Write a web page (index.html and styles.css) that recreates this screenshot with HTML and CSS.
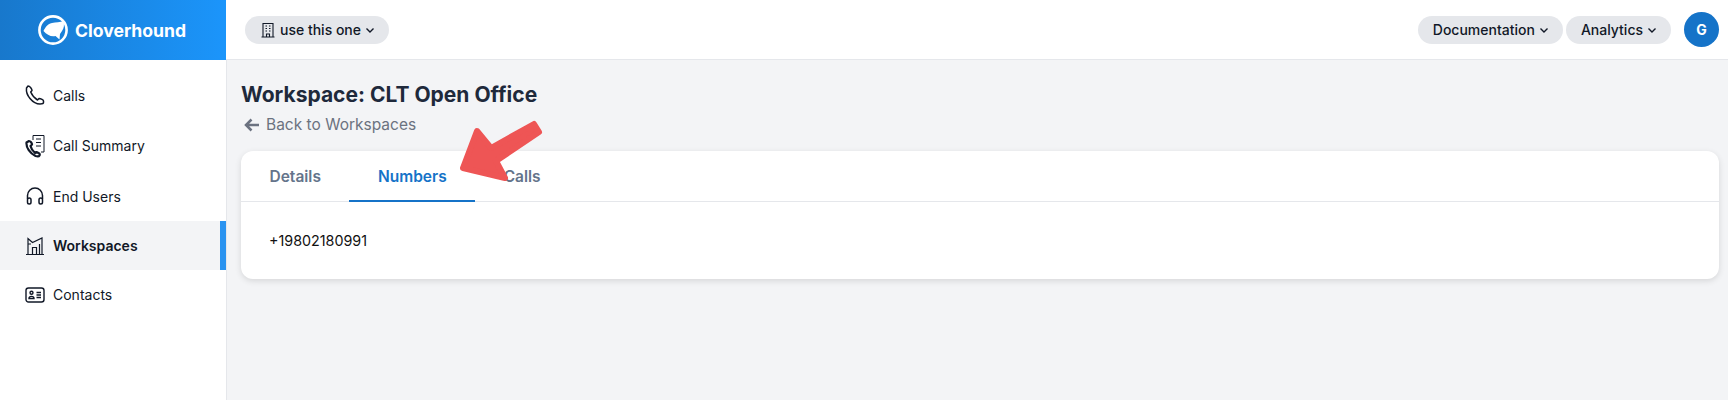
FILE: index.html
```html
<!DOCTYPE html>
<html lang="en">
<head>
  <meta charset="UTF-8" />
  <title>Workspace: CLT Open Office</title>
  <link rel="stylesheet" href="styles.css">
</head>
<body>
  <header class="topbar">
    <div class="brand">
      <svg class="brand-logo" width="32" height="32" viewBox="0 0 32 32">
        <circle cx="16" cy="16" r="13.6" fill="none" stroke="#fff" stroke-width="2.6"/>
        <path d="M6.5 17C8 14 10 10 15 9c4-.5 8-1 11.500-2 1 4 .5 7-1.500 10l-2 3-.5 5.500-4-3.500c-4.500 1-8.500-1-12-5Z" fill="#fff"/>
      </svg>
      <span class="brand-name">Cloverhound</span>
    </div>
    <div class="topbar-main">
      <button class="pill">
        <svg width="16" height="16" viewBox="0 0 16 16" fill="none" stroke="#111827" stroke-width="1.1">
          <path d="M1.5 15h13M3 15V1.500h10V15M6.500 15v-3h3v3M5.500 4H7M9 4h1.500M5.500 6.500H7M9 6.500h1.500M5.500 9H7M9 9h1.500"/>
        </svg>
        use this one
        <svg class="chev" width="10" height="10" viewBox="0 0 10 10"><path d="M1.5 3.500 5 7l3.500-3.500"/></svg>
      </button>
      <div class="topbar-right">
        <button class="pill">Documentation <svg class="chev" width="10" height="10" viewBox="0 0 10 10"><path d="M1.5 3.500 5 7l3.500-3.500"/></svg></button>
        <button class="pill">Analytics <svg class="chev" width="10" height="10" viewBox="0 0 10 10"><path d="M1.5 3.500 5 7l3.500-3.500"/></svg></button>
        <div class="avatar">G</div>
      </div>
    </div>
  </header>

  <div class="layout">
    <nav class="sidebar">
      <a class="nav-item">
        <svg width="20" height="20" viewBox="0 0 20 20" fill="none" stroke="#111827" stroke-width="1.5" stroke-linejoin="round">
          <path d="M3 1 1.500 3c-.5 4 1 7.500 3.500 10.500s6 5.500 10 5.500c1.500 0 3.500-.5 3.500-1.500v-1.500c0-1-2.500-2.500-4.500-2.500l-1.500 1.500C10 13.500 7 10 5.700 7L7 5.500C7 4 5 1 3 1Z"/>
        </svg>
        Calls
      </a>
      <a class="nav-item nav-item-tall">
        <svg width="20" height="24" viewBox="0 0 20 24" fill="none" stroke="#111827" stroke-linejoin="round">
          <path stroke-width="2.2" d="M4 7 1.500 8.500c-.5 5 3.500 11 9 13.500 1.500.5 3.500.5 4-.5s0-2-1-2.500l-2-1-1.500 1C7.500 17 6 14 5.500 12L7 10.500C7 9 5.500 7 4 7Z"/>
          <path stroke-width="1" d="M8 6V1.500h11V18h-3M11 5h5M11 8.500h5M11 12h5"/>
        </svg>
        Call Summary
      </a>
      <a class="nav-item">
        <svg width="20" height="20" viewBox="0 0 20 20" fill="none" stroke="#111827" stroke-width="1.5">
          <path d="M2.500 13V9.500a7.500 7.500 0 0 1 15 0V13"/>
          <rect x="2.500" y="12" width="3.500" height="6" rx="1.750"/>
          <rect x="14" y="12" width="3.500" height="6" rx="1.750"/>
        </svg>
        End Users
      </a>
      <a class="nav-item active">
        <svg width="20" height="20" viewBox="0 0 20 20" fill="none" stroke="#111827" stroke-width="1.2">
          <path d="M1 18.500h18M3 18.500V2.500l4.500 4 9.500-4.500v16.500M7.500 18.500v-7h4v7M14.500 8v10.500M3 8h3"/>
        </svg>
        Workspaces
      </a>
      <a class="nav-item nav-item-short">
        <svg width="20" height="20" viewBox="0 0 20 20" fill="none" stroke="#111827" stroke-width="1.4">
          <rect x="1" y="3" width="18" height="14" rx="2.500"/>
          <circle cx="6.500" cy="7.800" r="1.500"/>
          <path d="M4 13.500c0-2.800 5-2.800 5 0ZM11.500 7.500H16M11.500 10H16M11.500 12.500H16"/>
        </svg>
        Contacts
      </a>
    </nav>

    <main class="content">
      <h1 class="page-title">Workspace: CLT Open Office</h1>
      <a class="back-link">
        <svg width="16" height="14" viewBox="0 0 16 14" fill="none" stroke="#6b7280" stroke-width="2.5"><path d="M15 7H2.500M7.500 1.500 2 7l5.500 5.500"/></svg>
        Back to Workspaces
      </a>
      <section class="card">
        <div class="tabs">
          <div class="tab">Details</div>
          <div class="tab active">Numbers</div>
          <div class="tab">Calls</div>
        </div>
        <div class="card-body">+19802180991</div>
      </section>
    </main>
  </div>

  <svg class="annotation-arrow" width="100" height="75" viewBox="0 0 100 75">
    <path d="M27 16 41 33 84 9 89 17 46 46 55 63 13 53Z" fill="#ee5555" stroke="#ee5555" stroke-width="6" stroke-linejoin="round"/>
  </svg>
</body>
</html>
```

FILE: styles.css
```css
* {
  box-sizing: border-box;
}

body {
  margin: 0;
  height: 400px;
  overflow: hidden;
  font-family: 'Inter', sans-serif;
  font-optical-sizing: none;
  font-size: 14px;
  color: #111827;
  background: #f3f4f6;
}

.topbar {
  display: flex;
  height: 60px;
}

.brand {
  width: 226px;
  display: flex;
  align-items: center;
  justify-content: center;
  gap: 6px;
  padding-right: 3px;
  background: linear-gradient(to right, #1878cc, #1b95fb);
  color: #fff;
}

.brand-name {
  font-size: 17.6px;
  font-weight: 700;
}

.topbar-main {
  flex: 1;
  display: flex;
  align-items: center;
  justify-content: space-between;
  padding: 0 9px 0 19px;
  background: #fff;
  border-bottom: 1px solid #e5e7eb;
}

.topbar-right {
  display: flex;
  align-items: center;
  gap: 3px;
}

.pill {
  display: flex;
  align-items: center;
  gap: 4px;
  height: 28px;
  padding: 0 14px 0 15px;
  border: none;
  border-radius: 14px;
  background: #e5e7eb;
  font-family: inherit;
  font-size: 14px;
  font-weight: 500;
  color: #111827;
}

.chev {
  fill: none;
  stroke: #111827;
  stroke-width: 1.4;
}

.avatar {
  width: 35px;
  height: 35px;
  margin-left: 10px;
  border-radius: 50%;
  background: #1573c8;
  color: #fff;
  font-size: 14px;
  font-weight: 700;
  display: flex;
  align-items: center;
  justify-content: center;
}

.layout {
  display: flex;
  height: 340px;
}

.sidebar {
  width: 227px;
  padding-top: 10px;
  background: #fff;
  border-right: 1px solid #e5e7eb;
}

.nav-item {
  display: flex;
  align-items: center;
  gap: 8px;
  height: 50px;
  padding-left: 25px;
  font-size: 14px;
  color: #111827;
}

.nav-item-tall {
  height: 51px;
}

.nav-item-short {
  height: 49px;
}

.nav-item.active {
  height: 49px;
  font-weight: 600;
  background: #f3f4f6;
  border-right: 6px solid #2a93f0;
}

.content {
  flex: 1;
  padding: 21px 9px 0 14px;
}

.page-title {
  margin: 0;
  font-size: 21px;
  line-height: 28px;
  font-weight: 700;
  color: #1e293b;
}

.back-link {
  display: flex;
  align-items: center;
  gap: 6px;
  margin: 4px 0 0 3px;
  font-size: 15.5px;
  line-height: 24px;
  color: #6b7280;
}

.card {
  margin-top: 14px;
  background: #fff;
  border-radius: 12px;
  box-shadow: 0 2px 6px rgba(0, 0, 0, 0.12);
}

.tabs {
  display: flex;
  height: 51px;
  border-bottom: 1px solid #e5e7eb;
}

.tab {
  padding: 1px 28.5px 0;
  line-height: 50px;
  font-size: 15.5px;
  font-weight: 600;
  color: #64748b;
}

.tab.active {
  color: #1573c8;
  border-bottom: 2px solid #1573c8;
  height: 51px;
}

.card-body {
  padding: 29px 28px 28px;
  font-size: 14.3px;
  line-height: 20px;
  color: #111;
}

/* screenshot annotation, sits over the tabs */
.annotation-arrow {
  position: absolute;
  left: 450px;
  top: 115px;
}
```
